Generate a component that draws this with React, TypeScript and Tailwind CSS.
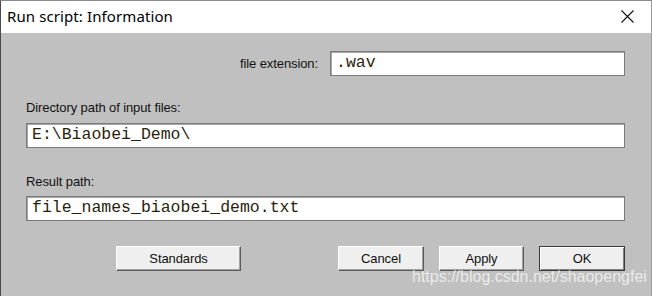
import React from "react";

const label = "text-[13px] text-[#111] leading-none tracking-[-0.1px]";
const mono = "font-['Liberation_Mono',monospace] text-[16.5px] text-[#2a1e0c] leading-none";

function Field({ value, className = "" }: { value: string; className?: string }) {
  return (
    <div
      className={`h-[25px] bg-white border border-[#7a7a7a] shadow-[inset_1px_1px_0_#a8a8a8] flex items-center pl-[5px] ${className}`}
    >
      <span className={mono}>{value}</span>
    </div>
  );
}

function Btn({ text, w, def = false }: { text: string; w: string; def?: boolean }) {
  return (
    <div
      className={`${w} h-[25px] bg-[#efefef] flex items-center justify-center ${
        def
          ? "border border-[#3a3a3a] shadow-[inset_1px_1px_0_#fff,inset_-1px_-1px_0_#808080]"
          : "border-t border-l border-t-[#fdfdfd] border-l-[#fdfdfd] border-r border-b border-r-[#5a5a5a] border-b-[#5a5a5a] shadow-[inset_-1px_-1px_0_#a0a0a0]"
      }`}
    >
      <span className={label}>{text}</span>
    </div>
  );
}

export default function App() {
  return (
    <div className="relative w-[652px] h-[296px] overflow-hidden font-['Liberation_Sans',Arial,sans-serif] border-t border-t-[#8a8a8a] border-l border-l-[#4a4a4a] border-r border-r-[#9a9a9a] bg-[#c0c0c0]">
      <div className="h-[32px] bg-white flex items-center justify-between pl-[6px] pr-[17px]">
        <span className="font-['Noto_Sans',sans-serif] text-[15px] text-black leading-none pb-[1px] tracking-[0.1px]">
          Run script: Information
        </span>
        <svg width="13" height="13" viewBox="0 0 13 13" className="mb-[1px]">
          <path d="M0.5 0.5 L12.5 12.5 M12.5 0.5 L0.5 12.5" stroke="#111" strokeWidth="1.1" fill="none" />
        </svg>
      </div>
      <div className="flex flex-col pl-[25px] pr-[26px] pt-[18px]">
        <div className="flex items-center justify-end">
          <span className={`${label} mr-[12px]`}>file extension:</span>
          <Field value=".wav" className="w-[295px]" />
        </div>
        <span className={`${label} mt-[25px]`}>Directory path of input files:</span>
        <Field value={"E:\\Biaobei_Demo\\"} className="mt-[9px]" />
        <span className={`${label} mt-[27px]`}>Result path:</span>
        <Field value="file_names_biaobei_demo.txt" className="mt-[8px]" />
        <div className="flex mt-[25px]">
          <div className="ml-[90px]">
            <Btn text="Standards" w="w-[125px]" />
          </div>
          <div className="ml-[97px] flex gap-[15px]">
            <Btn text="Cancel" w="w-[86px]" />
            <Btn text="Apply" w="w-[85px]" />
            <Btn text="OK" w="w-[86px]" def />
          </div>
        </div>
      </div>
      <span className="absolute left-[411px] top-[268px] text-[16px] leading-none text-white/70 font-['Liberation_Sans',Arial,sans-serif] whitespace-nowrap">
        https://blog.csdn.net/shaopengfei
      </span>
    </div>
  );
}
